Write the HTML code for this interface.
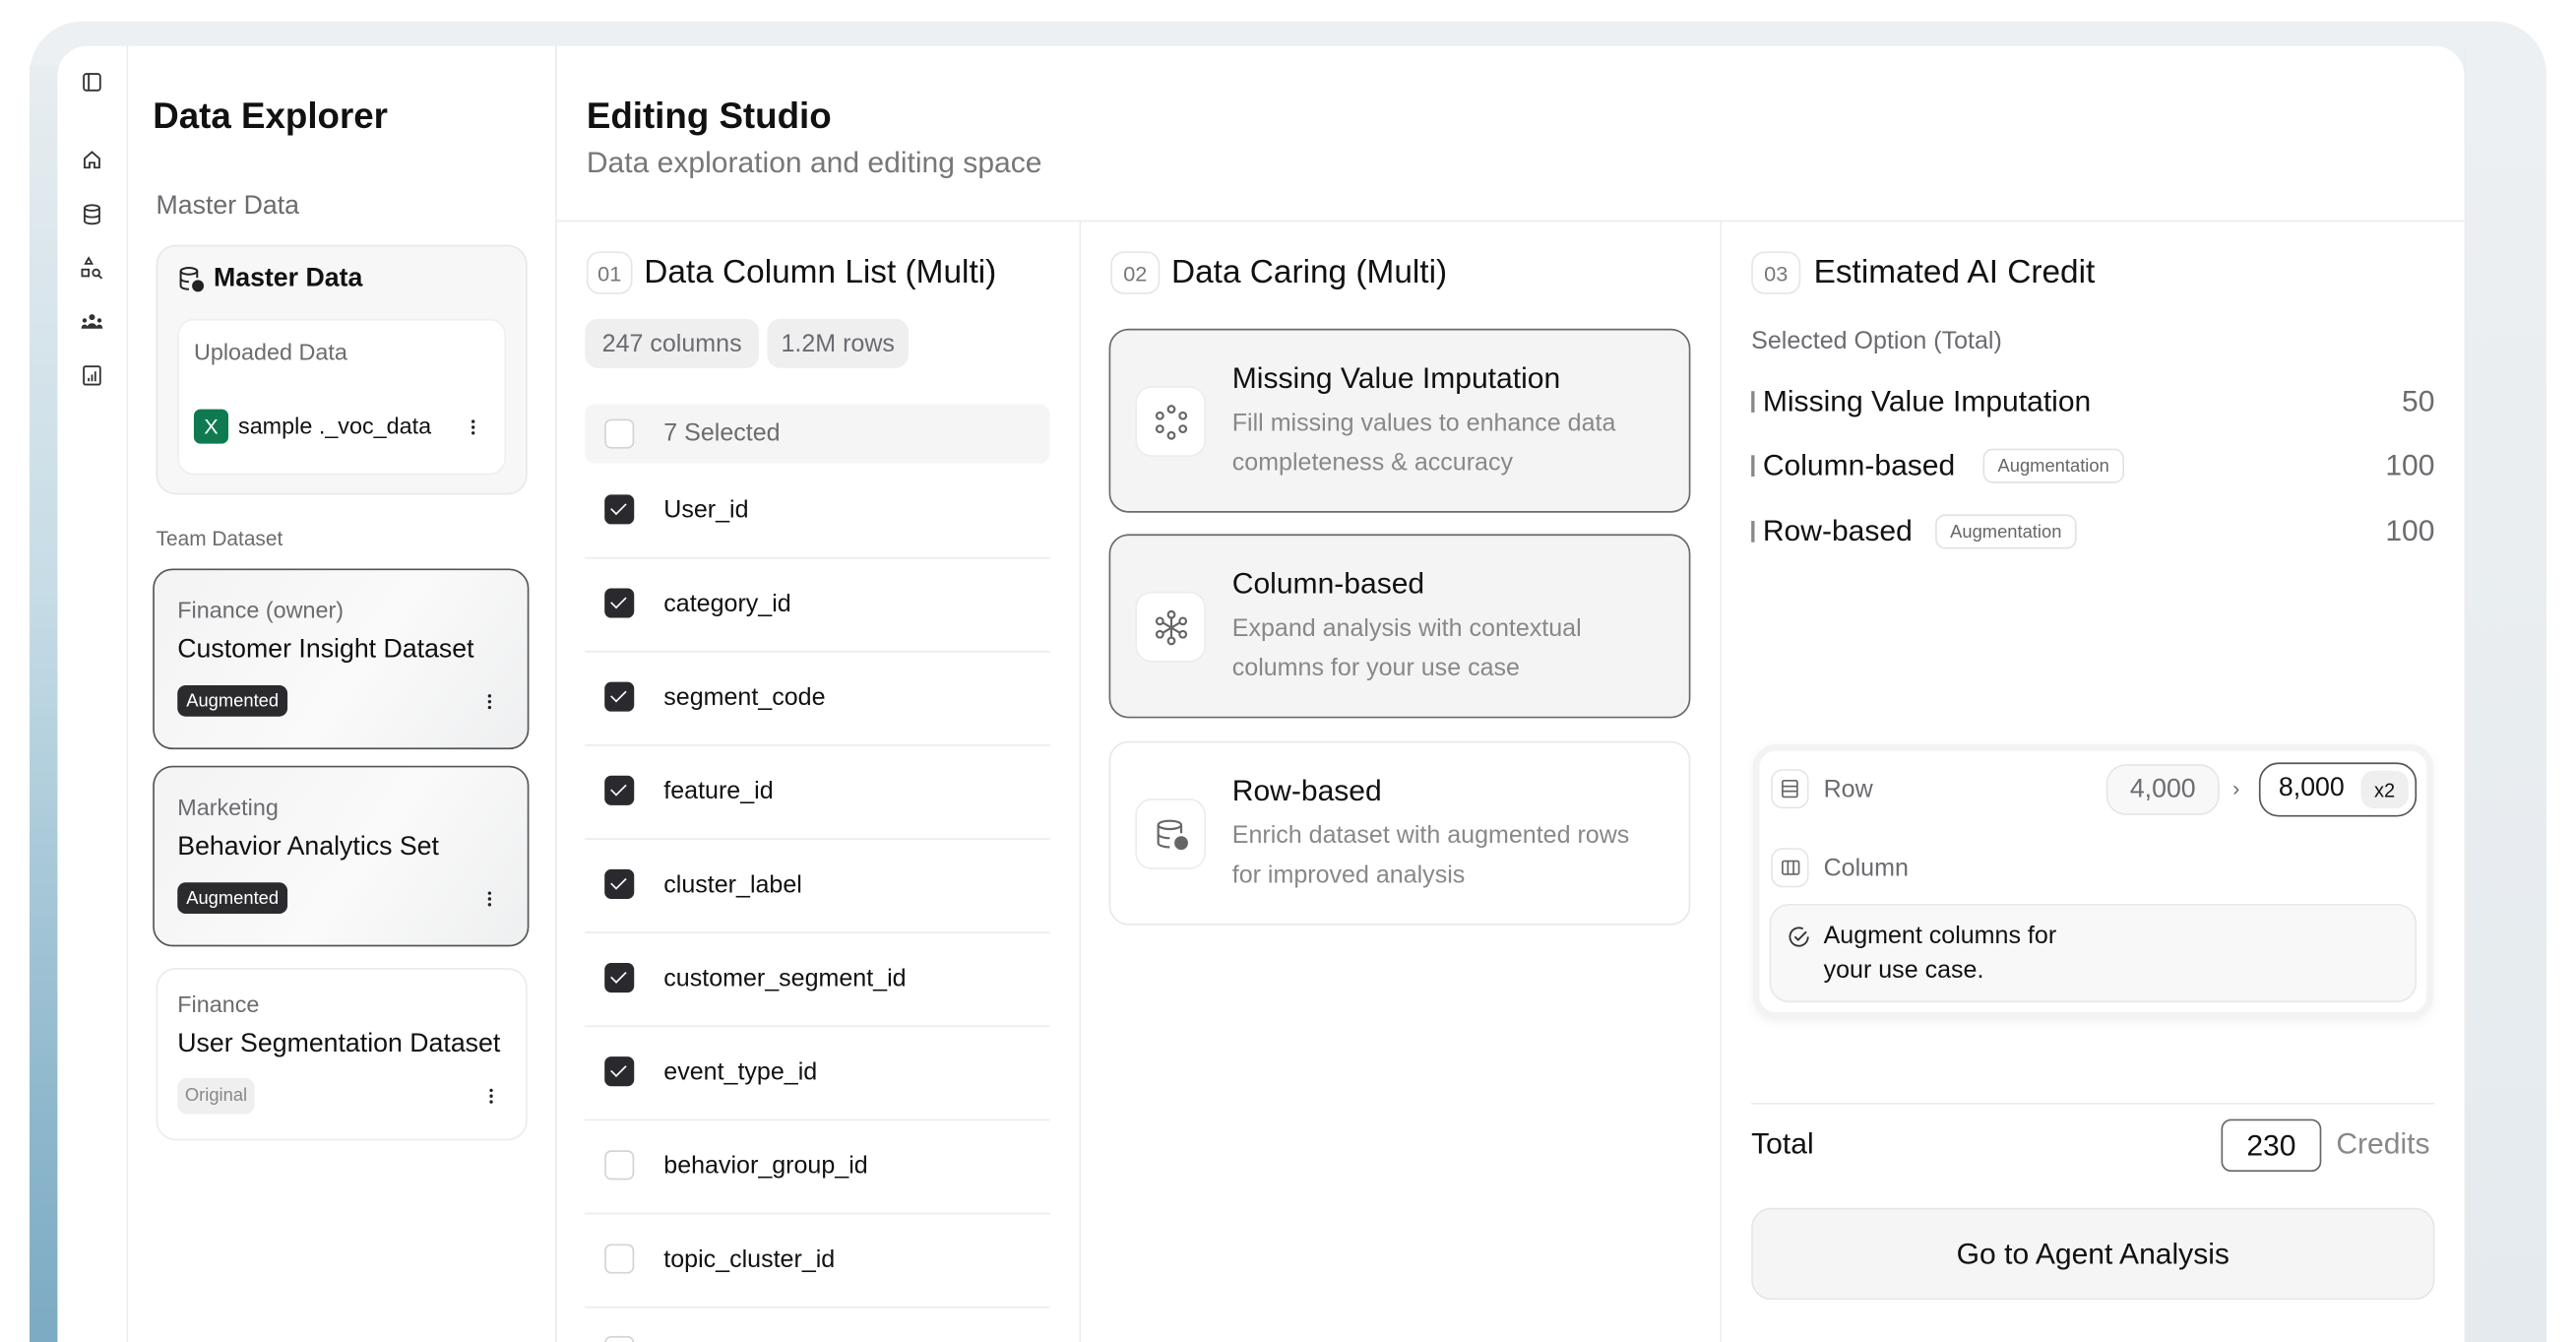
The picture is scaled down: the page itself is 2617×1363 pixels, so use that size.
<!DOCTYPE html>
<html><head><meta charset="utf-8"><style>
*{box-sizing:border-box;margin:0;padding:0}
html,body{width:2617px;height:1363px;overflow:hidden;background:#fff}
body{font-family:"Liberation Sans",sans-serif;color:#111;position:relative}
#s{position:absolute;left:0;top:0;width:1568px;height:817px;overflow:hidden;transform:scale(1.66901);transform-origin:0 0}
.a{position:absolute}
.frame{left:18px;top:13px;width:1532px;height:840px;border-radius:32px;background:linear-gradient(180deg,#edf0f2,#e4eaee)}
.lstrip{left:18px;top:40px;width:20px;height:800px;background:linear-gradient(180deg,#e8edf0 0%,#c6dce6 40%,#8db7cc 80%,#7aa8c2 100%)}
.panel{left:35px;top:28px;width:1465px;height:820px;background:#fff;border-radius:18px 18px 0 0}
.vl{position:absolute;width:1px;background:#ececee}
.hl{position:absolute;height:1px;background:#ececee}
.t{position:absolute;white-space:nowrap;line-height:1}
.g{color:#6b6b70}
.card{position:absolute;border-radius:12px}
.kb{position:absolute;width:2px;height:2px;background:#222;border-radius:1px;box-shadow:0 -3.5px 0 #222,0 3.5px 0 #222}
.num{position:absolute;height:26px;border:1px solid #e6e6e8;border-radius:8px;font-size:13px;color:#777;display:flex;align-items:center;justify-content:center}
.cb{position:absolute;left:368px;width:18px;height:18px;border-radius:4px;background:#2a2a2e}
.cb:after{content:"";position:absolute;left:6px;top:3px;width:4px;height:8px;border:solid #fff;border-width:0 1.5px 1.5px 0;transform:rotate(45deg)}
.cbo{position:absolute;left:368px;width:18px;height:18px;border-radius:4px;border:1px solid #d4d4d8;background:#fff}
.ib{position:absolute;left:15px;top:34px;width:43px;height:43px;border:1px solid #ececee;border-radius:10px;background:#fff;display:flex;align-items:center;justify-content:center}
.tag{position:absolute;height:21px;border:1px solid #e2e2e4;border-radius:6px;font-size:11px;color:#666;padding:0 8px;display:flex;align-items:center}
</style></head><body><div id="s">
<div class="a frame"></div>
<div class="a lstrip"></div>
<div class="a panel"></div>

<div class="vl" style="left:77px;top:28px;height:800px"></div>
<svg class="a" style="left:50px;top:44px" width="12" height="12" viewBox="0 0 12 12" fill="none" stroke="#333" stroke-width="1.1"><rect x="1" y="1" width="10" height="10" rx="1.5"/><path d="M4 1v10"/></svg>
<svg class="a" style="left:50px;top:91px" width="12" height="12" viewBox="0 0 12 12" fill="none" stroke="#333" stroke-width="1.1"><path d="M1.5 5.5L6 1.5l4.5 4V11h-3V8h-3v3h-3z"/></svg>
<svg class="a" style="left:50px;top:124px" width="12" height="13" viewBox="0 0 12 13" fill="none" stroke="#333" stroke-width="1.1"><ellipse cx="6" cy="2.5" rx="4.5" ry="1.7"/><path d="M1.5 2.5v8c0 1 2 1.7 4.5 1.7s4.5-.7 4.5-1.7v-8M1.5 6.5c0 1 2 1.7 4.5 1.7s4.5-.7 4.5-1.7"/></svg>
<svg class="a" style="left:49px;top:156px" width="14" height="14" viewBox="0 0 14 14" fill="none" stroke="#333" stroke-width="1.1"><path d="M5 1l2 3.5H3z"/><rect x="1" y="8" width="4" height="4"/><circle cx="9.5" cy="10" r="2"/><path d="M11 11.5l2 2"/></svg>
<svg class="a" style="left:49px;top:190px" width="14" height="12" viewBox="0 0 14 12" fill="#333"><circle cx="7" cy="3" r="1.8"/><circle cx="2.5" cy="5" r="1.3"/><circle cx="11.5" cy="5" r="1.3"/><path d="M4 10c0-2 1.3-3.3 3-3.3s3 1.3 3 3.3zM0.5 10c0-1.5.8-2.5 2-2.5s2 1 2 2.5zM9.5 10c0-1.5.8-2.5 2-2.5s2 1 2 2.5z"/></svg>
<svg class="a" style="left:50px;top:222px" width="12" height="13" viewBox="0 0 12 13" fill="none" stroke="#333" stroke-width="1.1"><rect x="1" y="1" width="10" height="11" rx="1"/><path d="M4 10V8M6 10V6M8 10V4"/></svg>

<div class="vl" style="left:338px;top:28px;height:800px"></div>
<div class="t" style="left:93px;top:60px;font-size:22px;font-weight:bold">Data Explorer</div>
<div class="t g" style="left:95px;top:118px;font-size:16px">Master Data</div>
<div class="card" style="left:95px;top:149px;width:226px;height:152px;background:#f7f7f8;border:1px solid #e8e8ea"></div>
<svg class="a" style="left:109px;top:162px" width="15" height="16" viewBox="0 0 15 16" fill="none" stroke="#222" stroke-width="1.2"><ellipse cx="6" cy="3" rx="5" ry="2"/><path d="M1 3v9c0 1.1 2.2 2 5 2M11 3v4M1 7.5c0 1.1 2.2 2 5 2"/><circle cx="11.5" cy="12" r="3" fill="#222"/></svg>
<div class="t" style="left:130px;top:162px;font-size:16px;font-weight:bold">Master Data</div>
<div class="card" style="left:108px;top:194px;width:200px;height:95px;background:#fff;border:1px solid #efeff1;border-radius:10px"></div>
<div class="t g" style="left:118px;top:207px;font-size:14px">Uploaded Data</div>
<div class="a" style="left:118px;top:249px;width:21px;height:21px;background:#0f7a50;border-radius:4px;color:#fff;font-size:13px;display:flex;align-items:center;justify-content:center">X</div>
<div class="t" style="left:145px;top:252px;font-size:14px">sample ._voc_data</div>
<div class="kb" style="left:287px;top:259px"></div>
<div class="t g" style="left:95px;top:322px;font-size:12.5px">Team Dataset</div>

<div class="card" style="left:93px;top:346px;width:229px;height:110px;border:1px solid #555;background:linear-gradient(125deg,#f3f3f4 0%,#fafafa 55%,#eeeff0 100%)"></div>
<div class="t g" style="left:108px;top:364px;font-size:14px">Finance (owner)</div>
<div class="t" style="left:108px;top:388px;font-size:16px">Customer Insight Dataset</div>
<div class="a" style="left:108px;top:417px;width:67px;height:19px;background:#2b2b2f;border-radius:5px;color:#fff;font-size:11px;display:flex;align-items:center;justify-content:center">Augmented</div>
<div class="kb" style="left:297px;top:426px"></div>

<div class="card" style="left:93px;top:466px;width:229px;height:110px;border:1px solid #555;background:linear-gradient(125deg,#f3f3f4 0%,#fafafa 55%,#eeeff0 100%)"></div>
<div class="t g" style="left:108px;top:484px;font-size:14px">Marketing</div>
<div class="t" style="left:108px;top:508px;font-size:16px">Behavior Analytics Set</div>
<div class="a" style="left:108px;top:537px;width:67px;height:19px;background:#2b2b2f;border-radius:5px;color:#fff;font-size:11px;display:flex;align-items:center;justify-content:center">Augmented</div>
<div class="kb" style="left:297px;top:546px"></div>

<div class="card" style="left:95px;top:589px;width:226px;height:105px;border:1px solid #ececee;background:#fff"></div>
<div class="t g" style="left:108px;top:604px;font-size:14px">Finance</div>
<div class="t" style="left:108px;top:628px;font-size:16px">User Segmentation Dataset</div>
<div class="a" style="left:108px;top:656px;width:47px;height:22px;background:#efeff0;border-radius:6px;color:#888;font-size:11px;display:flex;align-items:center;justify-content:center">Original</div>
<div class="kb" style="left:298px;top:666px"></div>

<div class="t" style="left:357px;top:60px;font-size:22px;font-weight:bold">Editing Studio</div>
<div class="t g" style="left:357px;top:90px;font-size:18px;color:#777">Data exploration and editing space</div>
<div class="hl" style="left:338px;top:134px;width:1162px"></div>
<div class="vl" style="left:657px;top:134px;height:700px"></div>
<div class="vl" style="left:1047px;top:134px;height:700px"></div>
<div class="vl" style="left:1500px;top:28px;height:800px"></div>

<div class="num" style="left:357px;top:153px;width:28px">01</div>
<div class="t" style="left:392px;top:156px;font-size:20px">Data Column List (Multi)</div>
<div class="a g" style="left:356px;top:194px;width:106px;height:30px;background:#efeff0;border-radius:8px;font-size:15px;display:flex;align-items:center;justify-content:center">247 columns</div>
<div class="a g" style="left:467px;top:194px;width:86px;height:30px;background:#efeff0;border-radius:8px;font-size:15px;display:flex;align-items:center;justify-content:center">1.2M rows</div>
<div class="a" style="left:356px;top:246px;width:283px;height:36px;background:#f5f5f6;border-radius:6px"></div>
<div class="cbo" style="top:255px"></div>
<div class="t g" style="left:404px;top:256px;font-size:15px">7 Selected</div>

<div class="cb" style="top:301px"></div><div class="t" style="left:404px;top:303px;font-size:15px">User_id</div><div class="hl" style="left:356px;top:339px;width:283px"></div>
<div class="cb" style="top:358px"></div><div class="t" style="left:404px;top:360px;font-size:15px">category_id</div><div class="hl" style="left:356px;top:396px;width:283px"></div>
<div class="cb" style="top:415px"></div><div class="t" style="left:404px;top:417px;font-size:15px">segment_code</div><div class="hl" style="left:356px;top:453px;width:283px"></div>
<div class="cb" style="top:472px"></div><div class="t" style="left:404px;top:474px;font-size:15px">feature_id</div><div class="hl" style="left:356px;top:510px;width:283px"></div>
<div class="cb" style="top:529px"></div><div class="t" style="left:404px;top:531px;font-size:15px">cluster_label</div><div class="hl" style="left:356px;top:567px;width:283px"></div>
<div class="cb" style="top:586px"></div><div class="t" style="left:404px;top:588px;font-size:15px">customer_segment_id</div><div class="hl" style="left:356px;top:624px;width:283px"></div>
<div class="cb" style="top:643px"></div><div class="t" style="left:404px;top:645px;font-size:15px">event_type_id</div><div class="hl" style="left:356px;top:681px;width:283px"></div>
<div class="cbo" style="top:700px"></div><div class="t" style="left:404px;top:702px;font-size:15px">behavior_group_id</div><div class="hl" style="left:356px;top:738px;width:283px"></div>
<div class="cbo" style="top:757px"></div><div class="t" style="left:404px;top:759px;font-size:15px">topic_cluster_id</div><div class="hl" style="left:356px;top:795px;width:283px"></div>
<div class="cbo" style="top:813px"></div>

<div class="num" style="left:676px;top:153px;width:30px">02</div>
<div class="t" style="left:713px;top:156px;font-size:20px">Data Caring (Multi)</div>

<div class="card" style="left:675px;top:200px;width:354px;height:112px;background:#f4f4f5;border:1px solid #6a6a6e">
<div class="ib"><svg width="24" height="24" viewBox="0 0 24 24" fill="none" stroke="#666" stroke-width="1.3"><circle cx="12" cy="4" r="2"/><circle cx="5" cy="8" r="2"/><circle cx="19" cy="8" r="2"/><circle cx="5" cy="16" r="2"/><circle cx="19" cy="16" r="2"/><circle cx="12" cy="20" r="2"/></svg></div>
<div class="t" style="left:74px;top:20px;font-size:18px">Missing Value Imputation</div>
<div class="t g" style="left:74px;top:49px;font-size:15px;color:#888">Fill missing values to enhance data</div>
<div class="t g" style="left:74px;top:73px;font-size:15px;color:#888">completeness &amp; accuracy</div>
</div>
<div class="card" style="left:675px;top:325px;width:354px;height:112px;background:#f4f4f5;border:1px solid #6a6a6e">
<div class="ib"><svg width="24" height="24" viewBox="0 0 24 24" fill="none" stroke="#666" stroke-width="1.3"><circle cx="12" cy="4" r="2"/><circle cx="12" cy="20" r="2"/><circle cx="5" cy="8" r="2"/><circle cx="19" cy="8" r="2"/><circle cx="5" cy="16" r="2"/><circle cx="19" cy="16" r="2"/><path d="M12 6v12M7 9l10 6M17 9l-10 6"/></svg></div>
<div class="t" style="left:74px;top:20px;font-size:18px">Column-based</div>
<div class="t g" style="left:74px;top:49px;font-size:15px;color:#888">Expand analysis with contextual</div>
<div class="t g" style="left:74px;top:73px;font-size:15px;color:#888">columns for your use case</div>
</div>
<div class="card" style="left:675px;top:451px;width:354px;height:112px;background:#fff;border:1px solid #e8e8ea">
<div class="ib"><svg width="24" height="24" viewBox="0 0 24 24" fill="none" stroke="#666" stroke-width="1.3"><ellipse cx="11" cy="6" rx="7" ry="2.5"/><path d="M4 6v11c0 1.4 3 2.5 7 2.5M18 6v5M4 11.5c0 1.4 3 2.5 7 2.5"/><circle cx="18" cy="17" r="3.5" fill="#666"/></svg></div>
<div class="t" style="left:74px;top:20px;font-size:18px">Row-based</div>
<div class="t g" style="left:74px;top:49px;font-size:15px;color:#888">Enrich dataset with augmented rows</div>
<div class="t g" style="left:74px;top:73px;font-size:15px;color:#888">for improved analysis</div>
</div>

<div class="num" style="left:1066px;top:153px;width:30px">03</div>
<div class="t" style="left:1104px;top:156px;font-size:20px">Estimated AI Credit</div>
<div class="t g" style="left:1066px;top:200px;font-size:15px">Selected Option (Total)</div>
<div class="a" style="left:1066px;top:238px;width:2px;height:13px;background:#888"></div>
<div class="t" style="left:1073px;top:235px;font-size:18px">Missing Value Imputation</div>
<div class="t g" style="left:1420px;top:235px;width:62px;text-align:right;font-size:18px">50</div>
<div class="a" style="left:1066px;top:277px;width:2px;height:13px;background:#888"></div>
<div class="t" style="left:1073px;top:274px;font-size:18px">Column-based</div>
<div class="tag" style="left:1207px;top:273px">Augmentation</div>
<div class="t g" style="left:1420px;top:274px;width:62px;text-align:right;font-size:18px">100</div>
<div class="a" style="left:1066px;top:317px;width:2px;height:13px;background:#888"></div>
<div class="t" style="left:1073px;top:314px;font-size:18px">Row-based</div>
<div class="tag" style="left:1178px;top:313px">Augmentation</div>
<div class="t g" style="left:1420px;top:314px;width:62px;text-align:right;font-size:18px">100</div>

<div class="card" style="left:1067px;top:453px;width:414px;height:167px;background:#fff;border:4px solid #f3f3f4;border-radius:14px;box-shadow:0 2px 6px rgba(0,0,0,.05)"></div>
<div class="a" style="left:1078px;top:468px;width:23px;height:24px;border:1px solid #e6e6e8;border-radius:7px;display:flex;align-items:center;justify-content:center"><svg width="11" height="12" viewBox="0 0 11 12" fill="none" stroke="#666" stroke-width="1"><rect x="1" y="1" width="9" height="10" rx="1"/><path d="M1 4.5h9M1 7.5h9"/></svg></div>
<div class="t g" style="left:1110px;top:473px;font-size:15px">Row</div>
<div class="a g" style="left:1282px;top:465px;width:69px;height:31px;border:1px solid #e6e6e8;background:#f8f8f9;border-radius:12px;font-size:16px;display:flex;align-items:center;justify-content:center">4,000</div>
<div class="t g" style="left:1359px;top:473px;font-size:13px">›</div>
<div class="a" style="left:1375px;top:464px;width:96px;height:33px;border:1px solid #555;border-radius:12px"></div>
<div class="t" style="left:1387px;top:472px;font-size:16px">8,000</div>
<div class="a" style="left:1437px;top:469px;width:29px;height:23px;background:#efeff0;border-radius:8px;font-size:12px;display:flex;align-items:center;justify-content:center">x2</div>
<div class="a" style="left:1078px;top:516px;width:23px;height:24px;border:1px solid #e6e6e8;border-radius:7px;display:flex;align-items:center;justify-content:center"><svg width="12" height="10" viewBox="0 0 12 10" fill="none" stroke="#666" stroke-width="1"><rect x="1" y="1" width="10" height="8" rx="1"/><path d="M4.3 1v8M7.7 1v8"/></svg></div>
<div class="t g" style="left:1110px;top:521px;font-size:15px">Column</div>
<div class="a" style="left:1077px;top:550px;width:394px;height:60px;background:#f8f8f9;border:1px solid #e8e8ea;border-radius:12px"></div>
<svg class="a" style="left:1088px;top:563px" width="14" height="14" viewBox="0 0 14 14" fill="none" stroke="#333" stroke-width="1.1"><path d="M12.5 7A5.5 5.5 0 1 1 9.5 2.2"/><path d="M4.5 7l2 2 5-5"/></svg>
<div class="t" style="left:1110px;top:562px;font-size:15px">Augment columns for</div>
<div class="t" style="left:1110px;top:583px;font-size:15px">your use case.</div>

<div class="hl" style="left:1066px;top:671px;width:416px"></div>
<div class="t" style="left:1066px;top:687px;font-size:18px">Total</div>
<div class="a" style="left:1352px;top:681px;width:61px;height:32px;border:1px solid #666;border-radius:6px;font-size:18px;display:flex;align-items:center;justify-content:center">230</div>
<div class="t g" style="left:1422px;top:687px;font-size:18px;color:#888">Credits</div>
<div class="a" style="left:1066px;top:735px;width:416px;height:56px;background:#f5f5f6;border:1px solid #e4e6e8;border-radius:12px;font-size:18px;display:flex;align-items:center;justify-content:center">Go to Agent Analysis</div>
</div></body></html>
